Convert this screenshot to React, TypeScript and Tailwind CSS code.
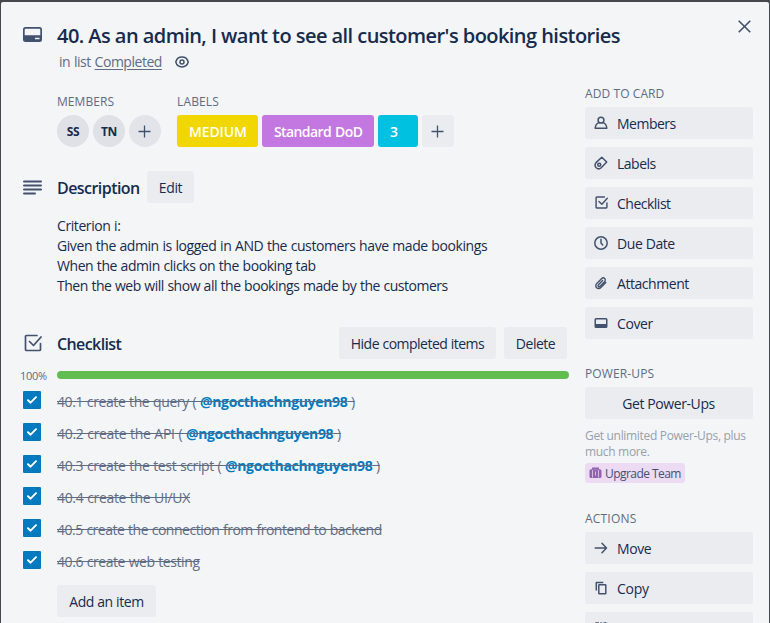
import React from "react";

type IconProps = { className?: string };

const stroke = {
  fill: "none",
  stroke: "currentColor",
  strokeWidth: 1.5,
} as const;

function CardIcon({ className }: IconProps) {
  return (
    <svg className={className} width="20" height="16" viewBox="0 0 20 16">
      <path fill="currentColor" fillRule="evenodd" d="M2.500 0h14A2.500 2.500 0 0 1 19 2.500v10a2.500 2.500 0 0 1-2.500 2.500h-14A2.500 2.500 0 0 1 0 12.500v-10A2.500 2.500 0 0 1 2.500 0ZM2.700 1.700a1 1 0 0 0-1 1V8.300h15.600V2.700a1 1 0 0 0-1-1ZM12 10.800v1.500h4.500v-1.500Z" />
    </svg>
  );
}

function EyeIcon() {
  return (
    <svg width="14" height="12" viewBox="0 0 14 12" {...stroke}>
      <path d="M.8 6C1.600 3 4.200 1.100 7 1.100S12.400 3 13.200 6C12.400 9 9.800 10.900 7 10.900S1.600 9 .8 6Z" />
      <circle cx="7" cy="6" r="2" />
    </svg>
  );
}

function DescriptionIcon() {
  return (
    <svg width="19" height="15" viewBox="0 0 19 15" fill="none" stroke="currentColor" strokeWidth="2" strokeLinecap="round">
      <path d="M1 1.500h17M1 5.500h17M1 9.500h17M1 13.500h11" />
    </svg>
  );
}

function CheckSquare({ size, width }: { size: number; width: number }) {
  return (
    <svg width={size} height={size} viewBox="0 0 18 18" fill="none" stroke="currentColor" strokeWidth={width} strokeLinecap="round" strokeLinejoin="round">
      <path d="M13 1.500H2.500a1 1 0 0 0-1 1v13a1 1 0 0 0 1 1h13a1 1 0 0 0 1-1V9.500" />
      <path d="m5.500 7.500 4 4 7.500-8.500" />
    </svg>
  );
}

function PersonIcon() {
  return (
    <svg width="14" height="14" viewBox="0 0 14 14" {...stroke} strokeLinejoin="round">
      <circle cx="7" cy="4.200" r="2.900" />
      <path d="M4.800 6.600C2.400 7.600 1.400 9.200 1.200 12.300h11.600C12.600 9.200 11.600 7.600 9.200 6.600" />
    </svg>
  );
}

function TagIcon() {
  return (
    <svg width="14" height="14" viewBox="0 0 14 14" {...stroke} strokeLinejoin="round">
      <path d="M7.800 1.200 12.700 6 7.200 11.700C5.800 13 3.600 13 2.200 11.700S.9 8.200 2 6.600Z" />
      <circle cx="5.200" cy="8.700" r="1.500" />
    </svg>
  );
}

function ClockIcon() {
  return (
    <svg width="14" height="14" viewBox="0 0 14 14" {...stroke} strokeLinecap="round">
      <circle cx="7" cy="7" r="6.200" />
      <path d="M7 3.300V7l1.700 2" />
    </svg>
  );
}

function ClipIcon() {
  return (
    <svg width="14" height="14" viewBox="0 0 14 14" fill="none" stroke="currentColor" strokeWidth="1.400" strokeLinecap="round">
      <path d="m11.800 6.500-4.900 5c-1.300 1.300-3.200 1.300-4.300.2s-1.100-2.900.2-4.200l4.700-4.800c1-1 2.400-1 3.200-.2s.8 2.200-.2 3.200L6 10.200c-.6.600-1.300.6-1.700.2s-.4-1.100.2-1.700l4.100-4.200" />
    </svg>
  );
}

function CoverIcon() {
  return (
    <svg width="14" height="14" viewBox="0 0 14 14">
      <path fill="currentColor" fillRule="evenodd" d="M2 2h10a1.500 1.500 0 0 1 1.500 1.500v7A1.500 1.500 0 0 1 12 12H2A1.500 1.500 0 0 1 .5 10.500v-7A1.500 1.500 0 0 1 2 2Zm0 1.500V8h10V3.500Z" />
    </svg>
  );
}

function ArrowIcon() {
  return (
    <svg width="14" height="14" viewBox="0 0 14 14" {...stroke} strokeLinecap="round" strokeLinejoin="round">
      <path d="M1.200 7h11M8 2.300 12.500 7 8 11.700" />
    </svg>
  );
}

function CopyIcon() {
  return (
    <svg width="14" height="14" viewBox="0 0 14 14" {...stroke} strokeLinejoin="round">
      <path d="M2.300 9.500v-8h7" />
      <rect x="4.800" y="3.800" width="7" height="9" rx=".5" />
    </svg>
  );
}

function TemplateIcon() {
  return (
    <svg width="14" height="14" viewBox="0 0 14 14" {...stroke}>
      <path d="M2 5V2h3M6.500 2h1.500M9.500 2H12v3M2 7v5h10V7" />
    </svg>
  );
}

function PlusIcon() {
  return (
    <svg className="mr-px" width="13" height="13" viewBox="0 0 13 13" fill="none" stroke="currentColor" strokeWidth="1.300">
      <path d="M6.500 .5v12M.5 6.500h12" />
    </svg>
  );
}

function BriefcaseIcon() {
  return (
    <svg width="13" height="12" viewBox="0 0 13 12">
      <path fill="none" stroke="#8f63b0" strokeWidth="1.400" d="M3.800 3V1.200h5.400V3" />
      <rect x=".5" y="2.200" width="12" height="8.800" rx="1.600" fill="#8f63b0" />
      <path fill="none" stroke="#dcc5e9" strokeWidth=".9" d="M3.500 3v7.500M9.500 3v7.500M6.500 4.500v4" />
    </svg>
  );
}

function SideHeading({ children, className }: { children: React.ReactNode; className: string }) {
  return <h3 className={`text-[12px] leading-4 text-[#5e6c84] ${className}`}>{children}</h3>;
}

function SideButton({ icon, label, className }: { icon: React.ReactNode; label?: string; className?: string }) {
  return (
    <button className="flex h-8 w-full shrink-0 items-center rounded-[3px] bg-[#ebecf0] pl-[9px] text-left text-[#172b4d]">
      <span className="mb-px flex w-[14px] justify-center text-[#42526e]">{icon}</span>
      {label && <span className={`ml-[9px] pt-0.5 ${className}`}>{label}</span>}
    </button>
  );
}

const addButtons = [
  { label: "Members", icon: <PersonIcon />, tracking: "tracking-[-0.5px]" },
  { label: "Labels", icon: <TagIcon />, tracking: "tracking-[-0.5px]" },
  { label: "Checklist", icon: <CheckSquare size={13} width={2} />, tracking: "tracking-[-0.5px]" },
  { label: "Due Date", icon: <ClockIcon />, tracking: "tracking-[-0.4px]" },
  { label: "Attachment", icon: <ClipIcon />, tracking: "tracking-[-0.45px]" },
  { label: "Cover", icon: <CoverIcon />, tracking: "tracking-[-0.4px]" },
];

const items = [
  { text: "40.1 create the query", mention: true, tracking: "tracking-[-0.4px] [word-spacing:0.5px]" },
  { text: "40.2 create the API", mention: true, tracking: "tracking-[-0.3px] [word-spacing:0.4px]" },
  { text: "40.3 create the test script", mention: true, tracking: "tracking-[-0.37px] [word-spacing:0.4px]" },
  { text: "40.4 create the UI/UX", mention: false, tracking: "tracking-[-0.32px] [word-spacing:0.4px]" },
  { text: "40.5 create the connection from frontend to backend", mention: false, tracking: "tracking-[-0.47px] [word-spacing:0.4px]" },
  { text: "40.6 create web testing", mention: false, tracking: "tracking-[-0.42px] [word-spacing:0.4px]" },
];

function ChecklistItem({ text, mention, tracking }: (typeof items)[number]) {
  return (
    <li className="flex h-8">
      <span className="mt-[7px] flex size-[18px] items-center justify-center rounded-[1px] bg-[#0079bf]">
        <svg width="10" height="8" viewBox="0 0 10 8" fill="none" stroke="#fff" strokeWidth="1.900" strokeLinecap="round" strokeLinejoin="round">
          <path d="m1 4.200 2.600 2.500L9 1.200" />
        </svg>
      </span>
      <span className={`ml-4 mt-2 whitespace-nowrap text-[#5e6c84] line-through ${tracking}`}>
        {text}
        {mention && (
          <>
            {" ( "}
            <span className="font-bold tracking-[-0.34px] text-[#0079bf]">@ngocthachnguyen98</span>
            {" )"}
          </>
        )}
      </span>
    </li>
  );
}

export default function App() {
  return (
    <div className="h-[623px] w-[770px] overflow-hidden bg-[#45484c] pl-px pr-px pt-0.5 font-['Open_Sans','Noto_Sans',sans-serif] text-[14px] leading-5 text-[#172b4d]">
      <div className="h-full overflow-hidden rounded-t-[2px] bg-[#f4f5f7]">
        <header className="flex h-[81px] pl-[22px] pr-[18px] pt-[22px] text-[#42526e]">
          <CardIcon className="mt-[3px]" />
          <div className="ml-[14px] flex-1">
            <h1 className="h-6 whitespace-nowrap text-[20px] font-semibold leading-6 tracking-[-0.55px] text-[#172b4d]">
              40. As an admin, I want to see all customer's booking histories
            </h1>
            <div className="ml-0.5 mt-1 flex items-center text-[#5e6c84]">
              <span className="tracking-[-0.47px] [word-spacing:0.6px]">
                in list <span className="underline underline-offset-2">Completed</span>
              </span>
              <span className="-mt-px ml-[13px] text-[#42526e]"><EyeIcon /></span>
            </div>
          </div>
          <svg className="-mt-[4px]" width="13" height="13" viewBox="0 0 13 13" fill="none" stroke="#42526e" strokeWidth="1.600">
            <path d="m.7.7 11.600 11.600M12.300.7.7 12.300" />
          </svg>
        </header>

        <div className="flex">
          <main className="w-[568px] pl-[22px] pt-[10px]">
            <div className="flex pl-[34px]">
              <section className="w-[120px]">
                <h3 className="h-[22px] text-[12px] leading-[18px] tracking-[0.08px] text-[#5e6c84]">MEMBERS</h3>
                <div className="flex gap-1 text-[12px] font-bold tracking-[-0.3px]">
                  <span className="flex size-8 items-center justify-center rounded-full bg-[#dfe1e6] pt-px">SS</span>
                  <span className="flex size-8 items-center justify-center rounded-full bg-[#dfe1e6] pt-px">TN</span>
                  <span className="flex size-8 items-center justify-center rounded-full bg-[#e2e4e9] text-[#42526e]"><PlusIcon /></span>
                </div>
              </section>
              <section>
                <h3 className="h-[22px] text-[12px] leading-[18px] tracking-[0.15px] text-[#5e6c84]">LABELS</h3>
                <div className="flex gap-1 whitespace-nowrap font-semibold leading-8 text-white">
                  <span className="h-8 w-[81px] rounded-[3px] bg-[#f2d600] pl-3 pt-px tracking-[-0.15px]">MEDIUM</span>
                  <span className="h-8 w-[112px] rounded-[3px] bg-[#c377e0] pl-3 pt-px tracking-[-0.6px] [word-spacing:1px]">Standard DoD</span>
                  <span className="h-8 w-10 rounded-[3px] bg-[#00c2e0] pl-3 pt-px">3</span>
                  <span className="flex size-8 items-center justify-center rounded-[3px] bg-[#ebecf0] text-[#42526e]"><PlusIcon /></span>
                </div>
              </section>
            </div>

            <div className="mt-6 flex h-8 items-center">
              <span className="text-[#42526e]"><DescriptionIcon /></span>
              <h2 className="ml-[15px] w-[90px] pt-0.5 text-[16px] font-semibold tracking-[-0.55px]">Description</h2>
              <button className="h-8 w-[47px] rounded-[3px] bg-[#ebecf0] pt-0.5 tracking-[-0.4px]">Edit</button>
            </div>
            <div className="ml-[34px] mt-[13px] whitespace-nowrap tracking-[-0.42px] [word-spacing:0.4px]">
              <p>Criterion i:</p>
              <p className="tracking-[-0.42px]">Given the admin is logged in AND the customers have made bookings</p>
              <p className="tracking-[-0.43px]">When the admin clicks on the booking tab</p>
              <p className="tracking-[-0.48px]">Then the web will show all the bookings made by the customers</p>
            </div>

            <div className="mt-[31px] flex h-8 items-center">
              <span className="ml-px text-[#42526e]"><CheckSquare size={18} width={1.7} /></span>
              <h2 className="ml-[15px] flex-1 pt-0.5 text-[16px] font-semibold tracking-[-0.6px]">Checklist</h2>
              <button className="h-8 w-[157px] rounded-[3px] bg-[#ebecf0] pt-0.5 tracking-[-0.52px] [word-spacing:0.4px]">Hide completed items</button>
              <button className="ml-2 mr-0.5 h-8 w-[63px] rounded-[3px] bg-[#ebecf0] pt-0.5 tracking-[-0.5px]">Delete</button>
            </div>
            <div className="-ml-[3px] mt-3 flex h-2 items-center">
              <span className="w-[37px] whitespace-nowrap pt-0.5 text-[11px] tracking-[-0.3px] text-[#5e6c84]">100%</span>
              <div className="h-2 w-[512px] rounded-full bg-[#61bd4f]" />
            </div>
            <ul className="mt-[5px]">
              {items.map((item) => <ChecklistItem key={item.text} {...item} />)}
            </ul>
            <button className="ml-[34px] mt-[9px] h-8 w-[99px] rounded-[3px] bg-[#ebecf0] pt-0.5 tracking-[-0.4px]">Add an item</button>
          </main>

          <aside className="ml-4 w-[168px] pt-[3px]">
            <SideHeading className="tracking-[0.08px]">ADD TO CARD</SideHeading>
            <div className="mt-[5px] flex flex-col gap-2">
              {addButtons.map((b) => <SideButton key={b.label} icon={b.icon} label={b.label} className={b.tracking} />)}
            </div>
            <SideHeading className="mt-[27px] tracking-[0.13px]">POWER-UPS</SideHeading>
            <button className="mt-[5px] h-8 w-full rounded-[3px] bg-[#ebecf0] pr-px pt-0.5 tracking-[-0.4px]">Get Power-Ups</button>
            <p className="mt-[9px] whitespace-nowrap text-[12px] leading-4 tracking-[-0.32px] text-[#97a0af]">
              Get unlimited Power-Ups, plus<br />much more.
            </p>
            <div className="mt-[3px] flex h-5 w-[100px] items-center whitespace-nowrap rounded-[3px] bg-[#ecdbf3] pl-1 text-[12px] tracking-[-0.55px] text-[#42526e]">
              <BriefcaseIcon />
              <span className="ml-[3px] pt-0.5">Upgrade Team</span>
            </div>
            <SideHeading className="mt-[28px] tracking-[0.2px]">ACTIONS</SideHeading>
            <div className="mt-[5px] flex flex-col gap-2">
              <SideButton icon={<ArrowIcon />} label="Move" className="tracking-[-0.4px]" />
              <SideButton icon={<CopyIcon />} label="Copy" className="tracking-[-0.3px]" />
              <SideButton icon={<TemplateIcon />} />
            </div>
          </aside>
        </div>
      </div>
    </div>
  );
}
